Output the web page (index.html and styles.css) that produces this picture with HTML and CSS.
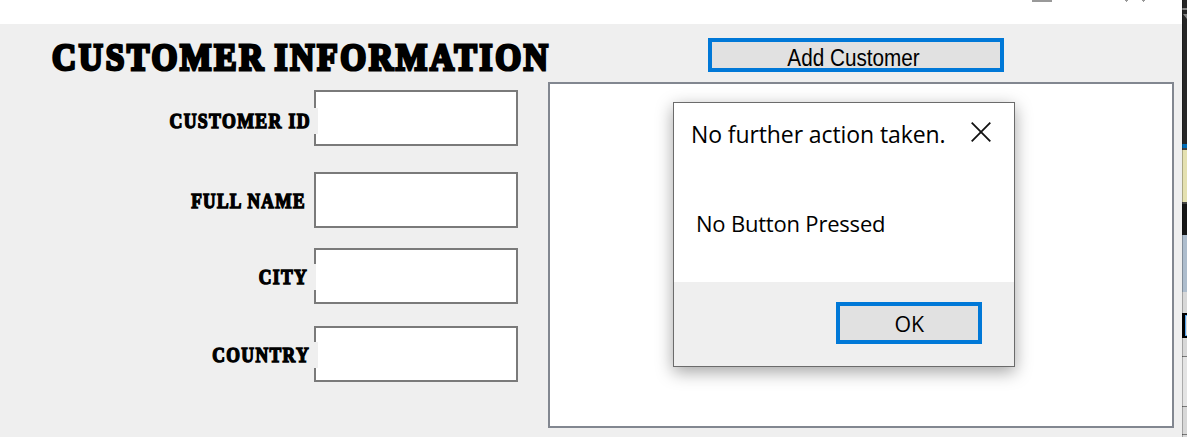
FILE: index.html
```html
<!DOCTYPE html>
<html lang="en">
<head>
<meta charset="utf-8">
<title>Customer Information</title>
<link rel="stylesheet" href="styles.css">
</head>
<body>
<div class="screen">
  <main class="window">
    <header class="titlebar">
      <svg class="caption" width="110" height="3" viewBox="0 0 110 3"><path d="M0 0h20v2H0z" fill="#999"/><path d="M93 0h3v1h-1v1h-1V1h-1zM110 0h3v1h-1v1h-1V1h-1z" fill="#999"/></svg>
    </header>
    <div class="client">
      <section class="form">
        <h1 class="heading"><span class="heading-text">CUSTOMER INFORMATION</span></h1>
        <div class="field field-id"><label class="label"><span class="t-id">CUSTOMER ID</span></label><div class="input"></div></div>
        <div class="field field-name"><label class="label"><span class="t-name">FULL NAME</span></label><div class="input"></div></div>
        <div class="field field-city"><label class="label"><span class="t-city">CITY</span></label><div class="input"></div></div>
        <div class="field field-country"><label class="label"><span class="t-country">COUNTRY</span></label><div class="input"></div></div>
      </section>
      <section class="results">
        <button class="button add"><span class="add-text">Add Customer</span></button>
        <div class="list"></div>
      </section>
    </div>
  </main>
  <svg class="backdrop" width="5" height="437" viewBox="0 0 5 437">
    <path fill="#262626" d="M0 0h5v235H0z"/>
    <path fill="#888" d="M0 8h5v2H0zM1 14h4v5z"/>
    <path fill="#006db8" d="M0 144h5v4H0z"/>
    <path fill="#444" d="M0 148h5v2H0zM0 202h5v2H0z"/>
    <path fill="#e5e1b1" d="M0 150h5v52H0z"/>
    <path fill="#151515" d="M0 204h5v31H0z"/>
    <path fill="#aebdcd" d="M0 235h5v57H0z"/>
    <path fill="#d8d8d8" d="M0 292h5v145H0z"/>
    <path fill="#000" d="M0 313h5v25H0z"/>
    <path fill="#55a5ee" d="M3 315h2v21H3z"/>
    <path fill="#ddd" d="M4 316h1v19H4z"/>
    <path fill="#e4e4e4" d="M0 357h5v49H0z"/>
    <path fill="#777" d="M0 356h5v1H0zM0 406h5v1H0zM0 434h5v1H0z"/>
    <path fill="#000" fill-opacity=".25" d="M0 0h1v437H0z"/>
  </svg>
</div>
<div class="dialog" role="dialog">
  <div class="dialog-head"><span class="dialog-title">No further action taken.</span>
    <svg class="close" width="20" height="20" viewBox="0 0 20 20"><path d="M.7.7l18.6 18.6M19.3.7L.7 19.3" stroke="#111" stroke-width="1.8" fill="none"/></svg>
  </div>
  <div class="dialog-body"><span class="message">No Button Pressed</span></div>
  <div class="dialog-foot"><button class="button ok"><span class="ok-text">OK</span></button></div>
</div>
</body>
</html>
```
FILE: styles.css
```css
* { box-sizing: border-box; }
body { margin: 0; background: #efefef; color: #000; overflow: hidden; }
.screen { display: flex; width: 1187px; height: 437px; }
.window { width: 1182px; display: flex; flex-direction: column; background: #efefef; }
.titlebar { height: 24px; background: #fff; padding-left: 1032px; }
.caption { display: block; overflow: visible; }
.client { display: flex; flex: 1; }
.form { width: 548px; padding-top: 13px; }
.heading { margin: 0 0 12px 52px; padding-top: 1px; height: 41px; white-space: nowrap;
  font: 700 37px/40px "Liberation Serif", serif; -webkit-text-stroke: 3px #000; }
.heading-text { display: inline-block; letter-spacing: 3.1px; word-spacing: -3px; transform: scaleX(.9); transform-origin: 0 50%; }
.field { display: flex; justify-content: flex-end; width: 518px; height: 56px; }
.field-name { margin-top: 26px; }
.field-city { margin-top: 20px; }
.field-country { margin-top: 22px; }
.input { width: 204px; height: 56px; border: 2px solid #7a7a7a; background: #fff; }
.label { position: relative; height: 26px; margin: 18px -4px 0 0; padding-right: 7px; background: #efefef;
  font: 700 20px/26px "Liberation Serif", serif; white-space: nowrap; -webkit-text-stroke: 1.4px #000; }
.label span { display: inline-block; letter-spacing: 1.5px; transform: scaleX(.88); transform-origin: 100% 50%; }
.label .t-id { transform: scaleX(.89); }
.field-name .label { margin-right: 0; padding-right: 8px; margin-top: 16px; }
.field-name .label span { transform: scaleX(.87); }
.field-city .label { margin-right: -2px; padding-right: 8px; margin-top: 16px; }
.field-country .label { margin-top: 16px; padding-right: 8px; }
.results { padding-top: 14px; width: 626px; display: flex; flex-direction: column; }
.button { margin: 0; padding: 0; display: flex; align-items: center; justify-content: center;
  border: 4px solid #0078d7; background: #e1e1e1; color: #000; }
.add { width: 296px; height: 34px; margin-left: 160px; font: 23px/26px "Liberation Sans", sans-serif; }
.add-text { transform: translate(-2px, 3px) scaleX(.9); }
.list { height: 346px; margin-top: 10px; border: 2px solid #828790; background: #fff; }
.dialog { position: absolute; left: 673px; top: 102px; width: 342px; height: 265px; display: flex; flex-direction: column;
  border: 1px solid #6b6b6b; background: #fff; box-shadow: 0 5px 16px rgba(0,0,0,.36); }
.dialog-head { display: flex; justify-content: space-between; height: 60px; padding: 15px 23px 0 17px;
  font: 23px/32px "Open Sans", "Noto Sans", sans-serif; letter-spacing: -.1px; white-space: nowrap; }
.close { margin-top: 4px; }
.dialog-body { flex: 1; padding: 44px 0 0 22px; font: 22px/32px "Open Sans", "Noto Sans", sans-serif; letter-spacing: -.2px; }
.dialog-foot { height: 84px; padding: 20px 32px 0 0; display: flex; justify-content: flex-end; background: #efefef; }
.ok { width: 146px; height: 42px; font: 22px/32px "Open Sans", "Noto Sans", sans-serif; }
.ok-text { transform: scaleX(.97); }
```
